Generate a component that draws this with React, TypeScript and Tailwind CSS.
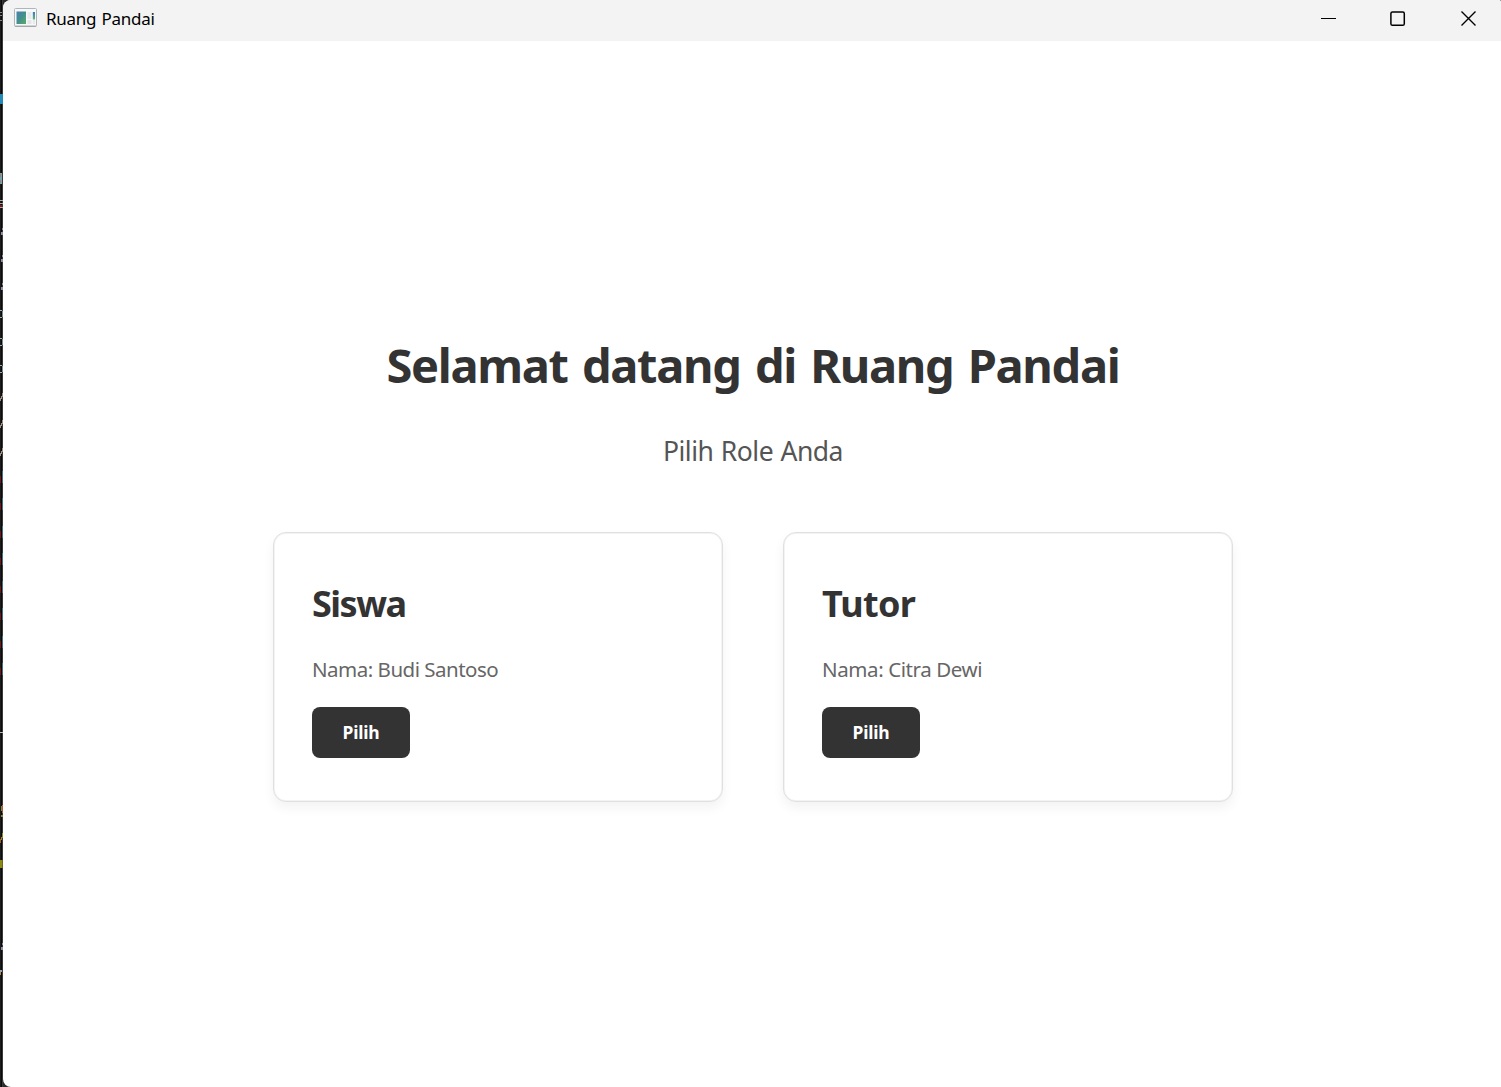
import React from "react";

const ringRows = [309, 337, 364];
const slashRows = [392, 419, 447];
const dotRows = [227, 254, 282, 942];
const redRows = [475, 502, 530, 557, 585, 612, 640, 667];

function Backdrop() {
  return (
    <svg width="3" height="1087" viewBox="0 0 3 1087" className="shrink-0" shapeRendering="crispEdges">
      <rect width="3" height="1087" fill="#1c1c1c" />
      <rect x="1" width="1" height="1087" fill="#0a0a0a" />
      <rect x="2" width="1" height="1087" fill="#3a3a3a" />
      <path d="M0 12h2v1h-2zM0 15h2v1h-2zM0 20h2v1h-2z" fill="#858585" />
      <rect y="94" width="3" height="10" fill="#2589b5" />
      <rect y="173" width="2" height="11" fill="#6da6b8" />
      <path d="M0 174h1v3h-1zM0 180h1v3h-1z" fill="#b57b50" />
      <path d="M0 200h3v1h-3zM0 203h3v1h-3zM0 207h3v1h-3z" fill="#a5a5a5" />
      <rect y="205" width="2" height="2" fill="#8b1515" />
      {dotRows.map((y) => (
        <path key={y} d={`M2 ${y + 1}h1v2h-1zM1 ${y + 5}h2v3h-2z`} fill="#8c8fa3" />
      ))}
      {ringRows.map((y) => (
        <g key={y}>
          <path d={`M0 ${y + 1}h2v1h-2zM0 ${y + 8}h2v1h-2z`} fill="#a9a9a9" />
          <rect x="2" y={y + 2} width="1" height="6" fill="#6f8f9b" />
        </g>
      ))}
      {slashRows.map((y) => (
        <path key={y} d={`M2 ${y + 1}h1v4h-1zM1 ${y + 4}h1v3h-1zM0 ${y + 6}h1v3h-1z`} fill="#a08d83" />
      ))}
      {redRows.map((y) => (
        <g key={y}>
          <rect y={y + 1} width="1" height="7" fill="#7c1218" />
          <rect x="2" y={y - 4} width="1" height="12" fill="#3f7285" />
        </g>
      ))}
      <rect y="732" width="3" height="1" fill="#b8b8b8" />
      <path d="M1 806h1v5h-1zM2 805h1v1h-1zM2 812h1v1h-1zM1 815h2v2h-2z" fill="#8f8238" />
      <rect x="2" y="806" width="1" height="6" fill="#a85a32" />
      <path d="M2 833h1v5h-1zM1 837h1v3h-1z" fill="#8b8a26" />
      <path d="M0 839h1v4h-1z" fill="#b5561f" />
      <rect y="860" width="2" height="8" fill="#8b8a12" />
      <rect x="2" y="860" width="1" height="8" fill="#6b6420" />
      <path d="M0 970h2v2h-2z" fill="#8fa5b5" />
      <path d="M0 972h1v3h-1z" fill="#c08040" />
    </svg>
  );
}

function AppIcon() {
  return (
    <svg width="23" height="19" viewBox="0 0 23 19" className="shrink-0">
      <defs>
        <linearGradient id="pane" x1="0" y1="0" x2="1" y2="1">
          <stop offset="0" stopColor="#4b80b4" />
          <stop offset="0.5" stopColor="#438f8d" />
          <stop offset="1" stopColor="#59ad6c" />
        </linearGradient>
        <linearGradient id="side" x1="0" y1="0" x2="0" y2="1">
          <stop offset="0" stopColor="#3f78c0" />
          <stop offset="1" stopColor="#62b37a" />
        </linearGradient>
      </defs>
      <rect x="0.5" y="0.5" width="22" height="18" rx="1" fill="#f7f8f9" stroke="#b0b5ba" />
      <rect x="1" y="17.6" width="21" height="1" fill="#9aa1a8" />
      <rect x="2.5" y="3.5" width="9.5" height="12.5" fill="url(#pane)" />
      <rect x="13.5" y="4" width="4" height="7" fill="#e8eaeb" />
      <rect x="13.5" y="12" width="4" height="4" fill="#e3e5e7" />
      <rect x="18.8" y="4" width="2.2" height="7.5" fill="url(#side)" />
      <rect x="18.8" y="12" width="2.2" height="4" fill="#e6e8ea" />
    </svg>
  );
}

function TitleBar() {
  return (
    <header className="flex h-[41px] shrink-0 items-start justify-between bg-[#f3f3f3]">
      <div className="flex items-start gap-[9px] pt-[8px] pl-[11px]">
        <AppIcon />
        <span className="pt-px text-[17px] leading-[19px] tracking-[-0.25px] whitespace-nowrap text-black [word-spacing:1px]">Ruang Pandai</span>
      </div>
      <div className="flex items-center pt-[10px] pr-[25px]">
        <button aria-label="Minimize" className="mr-[53px]">
          <svg width="16" height="17" viewBox="0 0 16 17"><path d="M0 8.5H15" stroke="#000" /></svg>
        </button>
        <button aria-label="Maximize" className="mr-[54px]">
          <svg width="16" height="17" viewBox="0 0 16 17">
            <rect x="0.9" y="1.9" width="13.4" height="13.4" rx="1.6" fill="none" stroke="#000" strokeWidth="1.5" />
          </svg>
        </button>
        <button aria-label="Close">
          <svg width="16" height="17" viewBox="0 0 16 17"><path d="M1.5 1.5L15.5 15.5M15.5 1.5L1.5 15.5" stroke="#000" strokeWidth="1.4" /></svg>
        </button>
      </div>
    </header>
  );
}

function RoleCard({ title, name, titleClass, nameClass }: { title: string; name: string; titleClass: string; nameClass: string }) {
  return (
    <section className="flex h-[270px] w-[450px] flex-col items-start rounded-[13px] border border-[#e0e0e0] bg-white pt-[47px] pl-[38px] shadow-[0_6px_12px_rgba(0,0,0,0.05),inset_0_0_0_1px_#f3f3f3]">
      <h2 className={`text-[36px] leading-[48px] font-bold whitespace-nowrap text-[#333] ${titleClass}`}>{title}</h2>
      <p className={`mt-[27px] text-[20.5px] leading-[28px] whitespace-nowrap text-[#666] ${nameClass}`}>{name}</p>
      <button className="mt-[24px] h-[51px] w-[98px] rounded-[8px] bg-[#333] text-[17.5px] font-bold tracking-[-0.2px] text-white">Pilih</button>
    </section>
  );
}

export default function App() {
  return (
    <div className="flex h-[1087px] w-[1501px] overflow-hidden bg-[#1c1c1c] font-['Noto_Sans','Open_Sans',sans-serif]">
      <Backdrop />
      <div className="flex min-w-0 flex-1 bg-[#2b2b2b]">
        <div className="flex min-w-0 flex-1 flex-col overflow-hidden rounded-l-[8px] rounded-tr-[2px] bg-white">
          <TitleBar />
          <main className="flex flex-1 flex-col items-center pt-[292px] pl-[2px]">
            <h1 className="text-[47px] leading-[64px] font-bold tracking-[-1.35px] whitespace-nowrap text-[#333] [word-spacing:3.5px]">
              Selamat datang di Ruang Pandai
            </h1>
            <p className="mt-[36px] text-[26.5px] leading-[36px] tracking-[-0.5px] whitespace-nowrap text-[#555] [word-spacing:1px]">Pilih Role Anda</p>
            <div className="mt-[63px] flex gap-[60px]">
              <RoleCard title="Siswa" name="Nama: Budi Santoso" titleClass="tracking-[-1.5px]" nameClass="tracking-[-0.5px]" />
              <RoleCard title="Tutor" name="Nama: Citra Dewi" titleClass="tracking-[-0.7px]" nameClass="tracking-[-0.4px]" />
            </div>
          </main>
        </div>
      </div>
    </div>
  );
}
